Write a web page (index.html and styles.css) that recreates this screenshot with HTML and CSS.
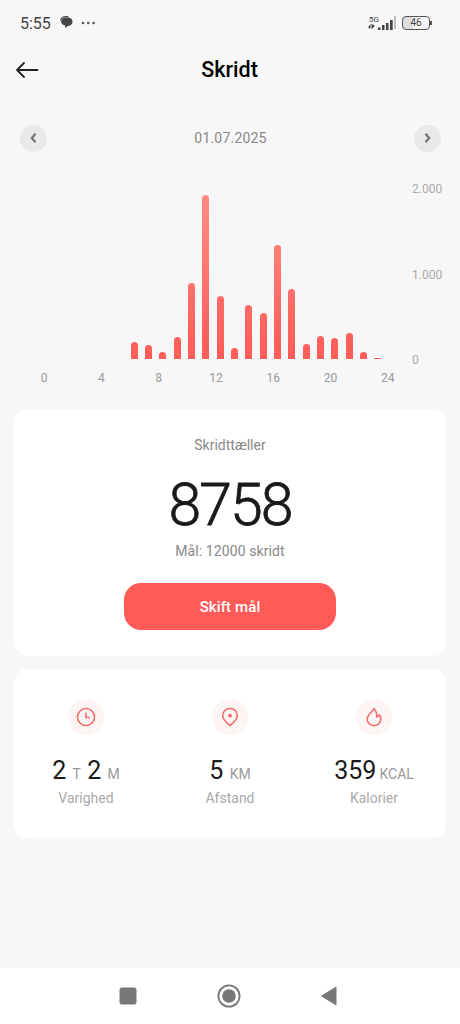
FILE: index.html
```html
<!DOCTYPE html>
<html lang="da">
<head>
    <meta charset="utf-8">
    <title>Skridt</title>
    <link rel="stylesheet" href="styles.css">
</head>
<body>
<div class="status">
    <span class="time">5:55</span>
    <svg class="chat" width="13" height="13" viewBox="0 0 13 13">
        <path d="M8.500 .900C4 0 .700 1.500 .700 4.600" fill="none" stroke="#444" stroke-width="1.200"/>
        <path d="M6.800 1.600c3.400 0 5.700 1.500 5.700 4.100S10.500 9.800 7.600 10L5.200 12.300V9.600C2.600 9.100 1.200 7.600 1.200 5.700c0-2.600 2.400-4.100 5.600-4.100z" fill="#444"/>
    </svg>
    <svg class="dots" width="15" height="4" viewBox="0 0 15 4" fill="#555">
        <circle cx="2" cy="2" r="1.300"/><circle cx="7.300" cy="2" r="1.300"/><circle cx="12.600" cy="2" r="1.300"/>
    </svg>
    <div class="network">
        <span>5G</span>
        <svg width="7" height="5" viewBox="0 0 7 5" fill="#444">
            <path d="M0 3l2-2v4zM2.500 0h1v4.500h-1zM4 .5h1v4H4zM5 .5l2 1.500-2 1.500z"/>
        </svg>
    </div>
    <svg class="signal" width="18" height="13" viewBox="0 0 18 13" fill="#444">
        <rect x="0" y="10.500" width="2.500" height="2.500"/>
        <rect x="4" y="8" width="2.500" height="5"/>
        <rect x="8" y="6" width="2.500" height="7"/>
        <rect x="12" y="3" width="2.700" height="10"/>
    </svg>
    <i class="signal-off"></i>
    <div class="battery"><span>46</span></div>
    <i class="battery-tip"></i>
</div>

<div class="header">
    <svg width="24" height="18" viewBox="0 0 24 18" fill="none" stroke="#222" stroke-width="1.800" stroke-linecap="round" stroke-linejoin="round">
        <path d="M22.500 9H2M9 2L2 9l7 7"/>
    </svg>
    <h1>Skridt</h1>
</div>

<div class="day">
    <button>
        <svg width="8" height="12" viewBox="0 0 8 12"><path d="M5.500 1.700L1.800 6l3.700 4.300"/></svg>
    </button>
    <span>01.07.2025</span>
    <button>
        <svg width="8" height="12" viewBox="0 0 8 12"><path d="M2.500 1.700L6.200 6l-3.700 4.300"/></svg>
    </button>
</div>

<div class="chart">
    <div class="bars">
        <i></i><i></i><i></i><i></i><i></i>
        <i class="faint" style="height: 1px"></i>
        <i style="height: 17px"></i>
        <i style="height: 14px"></i>
        <i style="height: 7px"></i>
        <i style="height: 22px"></i>
        <i style="height: 76px"></i>
        <i style="height: 164px"></i>
        <i style="height: 63px"></i>
        <i style="height: 11px"></i>
        <i style="height: 54px"></i>
        <i style="height: 46px"></i>
        <i style="height: 114px"></i>
        <i style="height: 70px"></i>
        <i style="height: 15px"></i>
        <i style="height: 23px"></i>
        <i style="height: 21px"></i>
        <i style="height: 26px"></i>
        <i style="height: 7px"></i>
        <i class="low" style="height: 1.500px"></i>
    </div>
    <div class="scale">
        <span>2.000</span><span>1.000</span><span>0</span>
    </div>
</div>
<div class="hours">
    <span>0</span><span>4</span><span>8</span><span>12</span><span>16</span><span>20</span><span>24</span>
</div>

<div class="card counter">
    <div class="label">Skridttæller</div>
    <div class="total">8758</div>
    <div class="goal">Mål: 12000 skridt</div>
    <button>Skift mål</button>
</div>

<div class="card stats">
    <div class="stat">
        <div class="icon">
            <svg width="20" height="20" viewBox="0 0 20 20">
                <circle cx="10" cy="10" r="8.500"/>
                <path d="M10 5.500V10.500H14"/>
            </svg>
        </div>
        <div class="value">2 <small>T</small> 2 <small>M</small></div>
        <div class="name">Varighed</div>
    </div>
    <div class="stat">
        <div class="icon">
            <svg width="20" height="20" viewBox="0 0 20 20">
                <path d="M10 1.500c-4.200 0-7.300 3-7.300 6.900 0 3.700 3.300 6.900 7.300 10.300 4-3.400 7.300-6.600 7.300-10.300C17.300 4.500 14.200 1.500 10 1.500z"/>
                <circle class="dot" cx="10" cy="8.700" r="1.900"/>
            </svg>
        </div>
        <div class="value">5 <small>KM</small></div>
        <div class="name">Afstand</div>
    </div>
    <div class="stat">
        <div class="icon">
            <svg width="20" height="20" viewBox="0 0 20 20">
                <path d="M10 1.500C8.800 4.800 3.200 7.500 3.200 12.200c0 3.700 2.900 6.400 6.800 6.400s6.800-2.700 6.800-6.400c0-1.800-.6-3.200-1.700-4.400-.5 1.200-1.200 1.900-2.400 2.300C12.900 7 12.200 4 10 1.500z" stroke-linejoin="round"/>
            </svg>
        </div>
        <div class="value tight">359 <small>KCAL</small></div>
        <div class="name">Kalorier</div>
    </div>
</div>

<div class="nav">
    <svg width="18" height="18" viewBox="0 0 18 18"><rect x=".5" y=".5" width="17" height="17" rx="2.500" fill="#777"/></svg>
    <svg width="24" height="24" viewBox="0 0 24 24">
        <circle cx="12" cy="12" r="10.600" fill="none" stroke="#777" stroke-width="1.800"/>
        <circle cx="12" cy="12" r="6.800" fill="#777"/>
    </svg>
    <svg width="18" height="20" viewBox="0 0 18 20"><path d="M16 1.200v17.600L1.500 10z" fill="#777" stroke="#777" stroke-linejoin="round"/></svg>
</div>
</body>
</html>
```

FILE: styles.css
```css
* {
    box-sizing: border-box;
}

body {
    display: flex;
    flex-direction: column;
    height: 1024px;
    margin: 0;
    background: #f7f7f7;
    font-family: Roboto, sans-serif;
    color: #888;
}

h1 {
    margin: 0;
    color: #000;
    font-size: 21.500px;
    font-weight: 500;
    line-height: 26px;
}

button {
    border: 0;
    padding: 0;
    font-family: inherit;
}

.status {
    display: flex;
    align-items: center;
    height: 45px;
    padding: 0 28px 0 20px;
    color: #444;
}

.time {
    padding-top: 1px;
    font-size: 16px;
}

.chat {
    margin-left: 9px;
}

.dots {
    margin-left: 8px;
}

.network {
    display: flex;
    flex-direction: column;
    width: 10px;
    margin-left: auto;
    font-size: 8px;
    line-height: 8px;
    text-indent: 1px;
}

.signal {
    margin-top: 1px;
}

.signal-off {
    width: 2px;
    height: 13px;
    margin: 0 0 0 -2px;
    background: #bbb;
}

.battery {
    width: 28px;
    height: 14px;
    margin-left: 6px;
    border: 1.500px solid #555;
    border-radius: 4px;
    background: linear-gradient(to right, #ddd 40%, transparent 40%);
    color: #444;
    font-size: 10px;
    line-height: 12px;
    text-align: center;
}

.battery-tip {
    width: 2px;
    height: 4px;
    background: #555;
}

.header {
    display: grid;
    grid-template-columns: 24px 1fr 24px;
    align-items: center;
    height: 49px;
    padding: 0 16px 0 15px;
    text-align: center;
}

.day {
    display: flex;
    align-items: center;
    justify-content: space-between;
    height: 28px;
    margin: 30px 19px 0 20px;
    font-size: 14px;
    letter-spacing: 0.200px;
}

.day button {
    display: flex;
    align-items: center;
    justify-content: center;
    width: 27px;
    height: 27px;
    border-radius: 50%;
    background: #e9e9e9;
}

.day path {
    fill: none;
    stroke: #777;
    stroke-width: 2.300;
}

.chart {
    display: flex;
    height: 185px;
    margin-top: 30px;
    padding-left: 41px;
}

.bars {
    display: flex;
    align-items: flex-end;
    justify-content: space-around;
    width: 344px;
    height: 177px;
}

.bars i {
    width: 7px;
    border-radius: 4px 4px 0 0;
    background: linear-gradient(to top, #ff5b57, #ff8c86 165px);
}

.bars .faint {
    background: #eee;
}

.bars .low {
    border-radius: 0;
}

.scale {
    display: flex;
    flex-direction: column;
    justify-content: space-between;
    margin-left: 27px;
    color: #aaa;
    font-size: 12px;
    line-height: 14px;
}

.hours {
    display: grid;
    grid-template-columns: repeat(7, 1fr);
    width: 401px;
    margin: 4px 0 0 15.500px;
    color: #999;
    font-size: 12px;
    line-height: 14px;
    text-align: center;
}

.card {
    margin: 0 14px;
    border-radius: 14px;
    background: #fff;
}

.counter {
    display: flex;
    flex-direction: column;
    align-items: center;
    height: 247px;
    margin-top: 24px;
    padding-top: 27px;
    font-size: 14px;
    line-height: 18px;
}

.total {
    margin-top: 23px;
    color: #1a1a1a;
    font-size: 59px;
    font-weight: 300;
    letter-spacing: -2px;
    line-height: 56px;
    -webkit-text-stroke: 0.800px #1a1a1a;
}

.goal {
    margin-top: 9px;
    letter-spacing: 0.100px;
}

.counter button {
    width: 212px;
    height: 47px;
    margin-top: 23px;
    border-radius: 17px;
    background: #ff5a57;
    color: #fff;
    font-size: 15px;
    font-weight: 500;
    letter-spacing: 0.100px;
}

.stats {
    display: grid;
    grid-template-columns: repeat(3, 1fr);
    height: 169px;
    margin-top: 13px;
    padding-top: 30px;
    text-align: center;
}

.icon {
    display: flex;
    align-items: center;
    justify-content: center;
    width: 36px;
    height: 36px;
    margin: 0 auto;
    border-radius: 50%;
    background: #fdf5f3;
}

.icon svg {
    fill: none;
    stroke: #f46c6c;
    stroke-width: 1.600;
}

.icon .dot {
    fill: #f46c6c;
    stroke: none;
}

.value {
    margin-top: 20px;
    color: #1a1a1a;
    font-size: 25px;
    line-height: 32px;
}

.value small {
    color: #999;
    font-size: 14px;
}

.value.tight {
    word-spacing: -3px;
}

.name {
    margin-top: -1px;
    color: #aaa;
    font-size: 14px;
    line-height: 18px;
}

.nav {
    display: flex;
    align-items: center;
    justify-content: space-between;
    height: 56px;
    margin-top: auto;
    padding: 0 122px 0 119px;
    background: #fff;
}
```
